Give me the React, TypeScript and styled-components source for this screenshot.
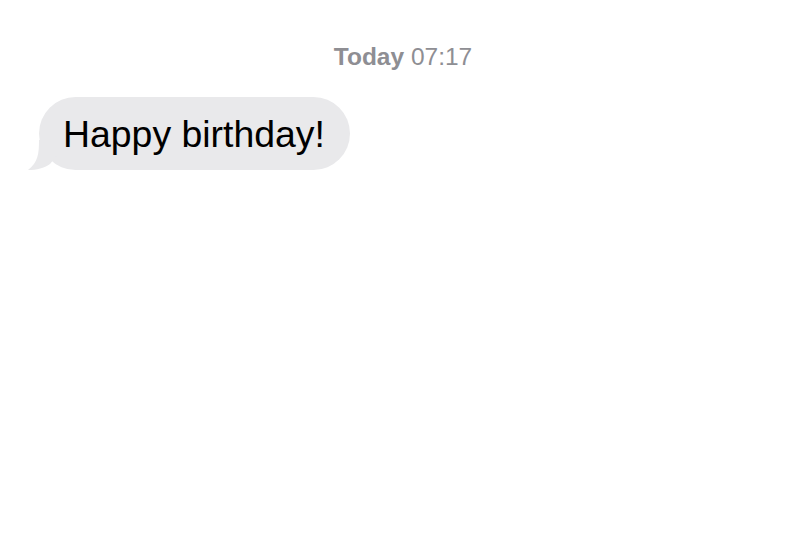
import styled, { createGlobalStyle } from "styled-components"

const GlobalStyle = createGlobalStyle`
  html, body {
    margin: 0;
    padding: 0;
    background: #ffffff;
  }
  body {
    font-family: "Liberation Sans", Arial, sans-serif;
  }
`

const Screen = styled.div`
  width: 806px;
  height: 555px;
  display: flex;
  flex-direction: column;
  background: #ffffff;
`

const Timestamp = styled.div`
  padding-top: 43px;
  text-align: center;
  font-size: 24.5px;
  line-height: 28px;
  color: #8e8e93;

  strong {
    font-weight: 700;
  }
`

const MessageRow = styled.div`
  display: flex;
  padding: 26px 0 0 39px;
`

const Bubble = styled.div`
  position: relative;
  background: #e9e9eb;
  color: #000000;
  border-radius: 37px;
  padding: 15px 25px 13px 24px;
  font-size: 37.4px;
  line-height: 45px;
  white-space: nowrap;
`

const Tail = styled.svg`
  position: absolute;
  left: -11px;
  bottom: 0;
  width: 30px;
  height: 30px;
`

export default function App() {
  return (
    <>
      <GlobalStyle />
      <Screen>
        <Timestamp>
          <strong>Today</strong> 07:17
        </Timestamp>
        <MessageRow>
          <Bubble>
            <Tail viewBox="0 0 30 30">
              <path
                d="M11 0 C11 14 10 22 0 30 C9 30 16 28 22 24 L30 14 L30 0 Z"
                fill="#e9e9eb"
              />
            </Tail>
            Happy birthday!
          </Bubble>
        </MessageRow>
      </Screen>
    </>
  )
}
